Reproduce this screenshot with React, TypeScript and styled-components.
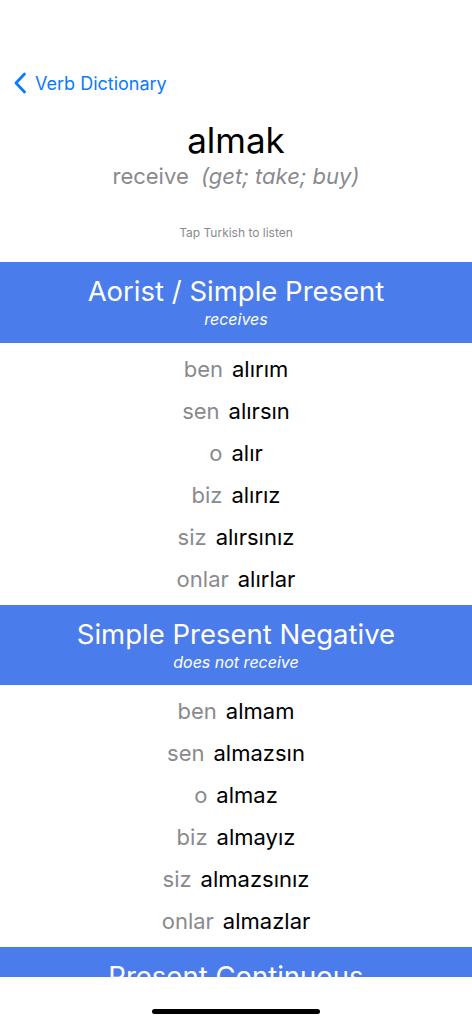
import React from 'react';
import styled, { createGlobalStyle } from 'styled-components';

const GlobalStyle = createGlobalStyle`
  html, body {
    margin: 0;
    padding: 0;
    background: #fff;
  }
  body {
    font-family: Inter, "Noto Sans", "Liberation Sans", sans-serif;
    -webkit-font-smoothing: antialiased;
  }
`;

const Screen = styled.div`
  width: 472px;
  height: 1024px;
  display: flex;
  flex-direction: column;
  overflow: hidden;
  background: #fff;
`;

const Scroll = styled.div`
  flex: 1;
  overflow: hidden;
`;

const NavBar = styled.div`
  display: flex;
  align-items: center;
  gap: 8px;
  height: 44px;
  margin-top: 61px;
  padding-left: 13px;
  color: #0a7aff;
  font-size: 18px;
`;

const Hero = styled.div`
  display: flex;
  flex-direction: column;
  align-items: center;
  padding-top: 14px;
`;

const Verb = styled.div`
  font-size: 35px;
  color: #000;
  line-height: 42px;
`;

const Meaning = styled.div`
  font-size: 22px;
  color: #8a8a8e;
  line-height: 30px;
  white-space: pre;
`;

const Alt = styled.span`
  font-style: italic;
`;

const Hint = styled.div`
  font-size: 12px;
  color: #8a8a8e;
  margin-top: 34px;
  margin-bottom: 22px;
`;

const SectionHeader = styled.div`
  background: #4b7cec;
  color: #fff;
  height: 80.5px;
  display: flex;
  flex-direction: column;
  align-items: center;
  justify-content: center;
`;

const SectionTitle = styled.div`
  font-size: 27.5px;
  line-height: 34px;
`;

const SectionSub = styled.div`
  font-size: 16px;
  font-style: italic;
  line-height: 22px;
`;

const Rows = styled.div`
  padding: 5px 0;
`;

const Row = styled.div`
  height: 42px;
  display: flex;
  justify-content: center;
  align-items: center;
  gap: 9px;
  font-size: 22px;
`;

const Pronoun = styled.span`
  color: #8a8a8e;
`;

const Form = styled.span`
  color: #000;
`;

const HomeArea = styled.div`
  height: 47px;
  flex-shrink: 0;
  display: flex;
  justify-content: center;
  background: #fff;
`;

const HomeIndicator = styled.div`
  width: 168px;
  height: 5px;
  border-radius: 3px;
  background: #000;
  margin-top: 32px;
`;

const pronouns = ['ben', 'sen', 'o', 'biz', 'siz', 'onlar'];

const sections = [
  {
    title: 'Aorist / Simple Present',
    sub: 'receives',
    forms: ['alırım', 'alırsın', 'alır', 'alırız', 'alırsınız', 'alırlar'],
  },
  {
    title: 'Simple Present Negative',
    sub: 'does not receive',
    forms: ['almam', 'almazsın', 'almaz', 'almayız', 'almazsınız', 'almazlar'],
  },
  {
    title: 'Present Continuous',
    sub: 'is receiving',
    forms: [] as string[],
  },
];

const App: React.FC = () => {
  return (
    <>
      <GlobalStyle />
      <Screen>
        <Scroll>
          <NavBar>
            <svg width="14" height="22" viewBox="0 0 14 22" fill="none">
              <path d="M11.5 2 L3 11 L11.5 20" stroke="#0a7aff" strokeWidth="2.8" strokeLinecap="round" strokeLinejoin="round" />
            </svg>
            <span>Verb Dictionary</span>
          </NavBar>
          <Hero>
            <Verb>almak</Verb>
            <Meaning>
              {'receive  '}
              <Alt>(get; take; buy)</Alt>
            </Meaning>
            <Hint>Tap Turkish to listen</Hint>
          </Hero>
          {sections.map((s) => (
            <div key={s.title}>
              <SectionHeader>
                <SectionTitle>{s.title}</SectionTitle>
                <SectionSub>{s.sub}</SectionSub>
              </SectionHeader>
              {s.forms.length > 0 && (
                <Rows>
                  {s.forms.map((f, i) => (
                    <Row key={f}>
                      <Pronoun>{pronouns[i]}</Pronoun>
                      <Form>{f}</Form>
                    </Row>
                  ))}
                </Rows>
              )}
            </div>
          ))}
        </Scroll>
        <HomeArea>
          <HomeIndicator />
        </HomeArea>
      </Screen>
    </>
  );
};

export default App;
